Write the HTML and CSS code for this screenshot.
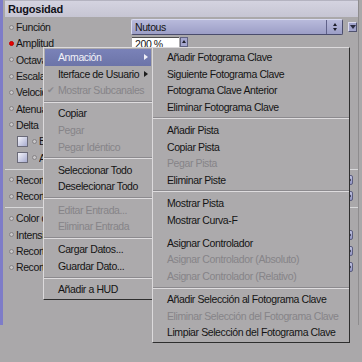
FILE: index.html
```html
<!DOCTYPE html>
<html lang="es">
<head>
  <meta charset="UTF-8" />
  <title>Rugosidad</title>
  <link rel="stylesheet" href="styles.css">
</head>
<body>

  <div class="panel">
    <div class="title">Rugosidad</div>

    <div class="rows">
      <div class="row">
        <span class="dot"></span><span class="label">Función</span>
        <div class="select"><span class="select-text">Nutous</span><span class="spin"></span></div>
        <span class="drop-btn"></span>
      </div>
      <div class="row">
        <span class="dot red"></span><span class="label">Amplitud</span>
        <div class="field">200 %</div><span class="up-btn"></span>
      </div>
      <div class="row"><span class="dot"></span><span class="label">Octavas</span></div>
      <div class="row"><span class="dot"></span><span class="label">Escala</span></div>
      <div class="row"><span class="dot"></span><span class="label">Velocidad</span></div>
      <div class="row"><span class="dot"></span><span class="label">Atenuación</span></div>
      <div class="row"><span class="dot"></span><span class="label">Delta</span></div>
      <div class="row sub"><span class="check"></span><span class="dot"></span><span class="label">Bordes</span></div>
      <div class="row sub"><span class="check"></span><span class="dot"></span><span class="label">Absoluto</span></div>

      <div class="line"></div>

      <div class="row"><span class="dot"></span><span class="label">Recortar Inferior</span><span class="spinner"></span></div>
      <div class="row"><span class="dot"></span><span class="label">Recortar Superior</span><span class="spinner"></span></div>

      <div class="line"></div>

      <div class="row"><span class="dot"></span><span class="label">Color de Fondo</span></div>
      <div class="row"><span class="dot"></span><span class="label">Intensidad</span><span class="spinner"></span></div>
      <div class="row"><span class="dot"></span><span class="label">Recortar Mín</span><span class="spinner"></span></div>
      <div class="row"><span class="dot"></span><span class="label">Recortar Máx</span><span class="spinner"></span></div>
    </div>
  </div>

  <!-- context menu -->
  <div class="menu main-menu">
    <div class="item active arrow">Anmación</div>
    <div class="item arrow">Iterface de Usuario</div>
    <div class="item off ticked">Mostrar Subcanales</div>
    <div class="sep"></div>
    <div class="item">Copiar</div>
    <div class="item off">Pegar</div>
    <div class="item off">Pegar Idéntico</div>
    <div class="sep"></div>
    <div class="item">Seleccionar Todo</div>
    <div class="item">Deselecionar Todo</div>
    <div class="sep"></div>
    <div class="item off">Editar Entrada...</div>
    <div class="item off">Eliminar Entrada</div>
    <div class="sep"></div>
    <div class="item">Cargar Datos...</div>
    <div class="item">Guardar Dato...</div>
    <div class="sep"></div>
    <div class="item">Añadir a HUD</div>
  </div>

  <div class="menu sub-menu">
    <div class="item">Añadir Fotograma Clave</div>
    <div class="item">Siguiente Fotograma Clave</div>
    <div class="item">Fotograma Clave Anterior</div>
    <div class="item">Eliminar Fotograma Clave</div>
    <div class="sep"></div>
    <div class="item">Añadir Pista</div>
    <div class="item">Copiar Pista</div>
    <div class="item off">Pegar Pista</div>
    <div class="item">Eliminar Piste</div>
    <div class="sep"></div>
    <div class="item">Mostrar Pista</div>
    <div class="item">Mostrar Curva-F</div>
    <div class="sep blank"></div>
    <div class="item">Asignar Controlador</div>
    <div class="item off">Asignar Controlador (Absoluto)</div>
    <div class="item off">Asignar Controlador (Relativo)</div>
    <div class="sep"></div>
    <div class="item">Añadir Selección al Fotograma Clave</div>
    <div class="item off">Eliminar Selección del Fotograma Clave</div>
    <div class="item">Limpiar Selección del Fotograma Clave</div>
  </div>

</body>
</html>
```

FILE: styles.css
```css
body {
  margin: 0;
  width: 362px;
  height: 362px;
  overflow: hidden;
  position: relative;
  background: #aaa8aa;
  font-family: 'Liberation Sans', Arial, sans-serif;
  font-size: 10.5px;
  letter-spacing: -0.4px;
  color: #141414;
}

.panel {
  height: 325px;
  border-left: 3px solid #7e7cc8;
  border-right: 1px solid #8e8c8e;
  width: 355px;
}

/* title bar */
.title {
  height: 16px;
  line-height: 16px;
  margin-left: 2px;
  padding-left: 3px;
  background: linear-gradient(#d4d3e0, #c6c5d3);
  border-top: 1px solid #b4b3c0;
  font-weight: bold;
  font-size: 11px;
  letter-spacing: -0.2px;
  color: #101018;
}

.rows {
  padding-top: 2px;
}

.row {
  height: 16.3px;
  display: flex;
  align-items: center;
  padding-left: 6px;
  white-space: nowrap;
}

.row.sub {
  padding-left: 14px;
}

.dot {
  width: 3px;
  height: 3px;
  border: 1px solid #848284;
  border-radius: 50%;
  background: #c8c6c8;
  margin-right: 2px;
  flex: none;
}

.dot.red {
  background: #e80000;
  border-color: #c00000;
}

.label {
  width: 115px;
  flex: none;
  overflow: hidden;
}

.sub .label {
  width: auto;
}

.check {
  width: 9px;
  height: 9px;
  border: 1px solid #6a6a78;
  background: linear-gradient(135deg, #f4f4fa, #a8acd0);
  margin-right: 4px;
}

.line {
  height: 6px;
  margin-left: 2px;
  box-sizing: border-box;
  border-bottom: 1px solid #d8d8da;
  position: relative;
  top: -2px;
}

/* controls */
.select {
  width: 212px;
  height: 16px;
  box-sizing: border-box;
  display: flex;
  align-items: center;
  background: linear-gradient(#b8badb, #9c9ec6);
  border: 1px solid;
  border-color: #d8daf0 #4a4c6c #4a4c6c #d8daf0;
  border-radius: 2px;
}

.select-text {
  flex: 1;
  padding-left: 3px;
}

.spin {
  width: 15px;
  height: 100%;
  border-left: 1px solid #60628a;
  position: relative;
}

.spin::before, .spin::after,
.spinner::before, .spinner::after {
  content: '';
  position: absolute;
  left: 50%;
  margin-left: -2px;
  border-left: 2px solid transparent;
  border-right: 2px solid transparent;
}

.spin::before { top: 3px; border-bottom: 3px solid #1c1c28; }
.spin::after { bottom: 3px; border-top: 3px solid #1c1c28; }

.drop-btn {
  width: 9px;
  height: 10px;
  margin-left: 5px;
  box-sizing: border-box;
  background: #a2a4cc;
  border: 1px solid;
  border-color: #dcdcee #50526e #50526e #dcdcee;
  position: relative;
}

.drop-btn::after {
  content: '';
  position: absolute;
  left: 1px;
  top: 2px;
  border-left: 3px solid transparent;
  border-right: 3px solid transparent;
  border-top: 4px solid #2a2c40;
}

.field {
  width: 47px;
  height: 12px;
  line-height: 12px;
  margin-left: 1px;
  padding-left: 3px;
  box-sizing: border-box;
  background: #fff;
  border-top: 1px solid #505050;
  margin-top: 2px;
  align-self: flex-start;
}

.up-btn {
  width: 8px;
  height: 10px;
  margin-left: 1px;
  align-self: flex-start;
  margin-top: 2px;
  box-sizing: border-box;
  background: #a4a6ce;
  border: 1px solid #606280;
  position: relative;
}

.up-btn::after {
  content: '';
  position: absolute;
  left: 1px;
  top: 2px;
  border-left: 2px solid transparent;
  border-right: 2px solid transparent;
  border-bottom: 3px solid #1c1c28;
}

.spinner {
  width: 8px;
  height: 10px;
  margin-left: auto;
  margin-right: 5px;
  box-sizing: border-box;
  background: linear-gradient(#c0c2e2, #9092c0);
  border: 1px solid #5c5e80;
  border-radius: 2px;
  position: relative;
}

.spinner::before { top: 1px; border-bottom: 3px solid #1c1c28; }
.spinner::after { bottom: 1px; border-top: 3px solid #1c1c28; }

/* menus */
.menu {
  position: absolute;
  top: 47px;
  padding: 1px;
  background: #acaaac;
  border: 1px solid;
  border-color: #dcdadc #2e2e2e #2e2e2e #dcdadc;
}

.main-menu {
  left: 43px;
  width: 106px;
}

.sub-menu {
  left: 152px;
  width: 194px;
}

.item {
  height: 16.6px;
  line-height: 16.6px;
  padding-left: 13px;
  white-space: nowrap;
  position: relative;
}

.item.off {
  color: #868488;
}

.item.active {
  background: linear-gradient(#7a82b8, #6c74a8);
  color: #f2f2f8;
}

.item.arrow::after {
  content: '';
  position: absolute;
  right: 3px;
  top: 5px;
  border-top: 3px solid transparent;
  border-bottom: 3px solid transparent;
  border-left: 4px solid #1c1c1c;
}

.item.active.arrow::after {
  border-left-color: #f0f0f8;
}

.item.ticked::before {
  content: '\2714';
  position: absolute;
  left: 2px;
  top: 0;
  font-size: 9px;
  color: #8a888c;
}

.sep {
  height: 6.6px;
  position: relative;
}

.sep::after {
  content: '';
  position: absolute;
  left: -1px;
  right: -1px;
  top: 2px;
  border-top: 1px solid #8c8a8e;
  border-bottom: 1px solid #dedcde;
}

.sep.blank::after {
  display: none;
}
```
